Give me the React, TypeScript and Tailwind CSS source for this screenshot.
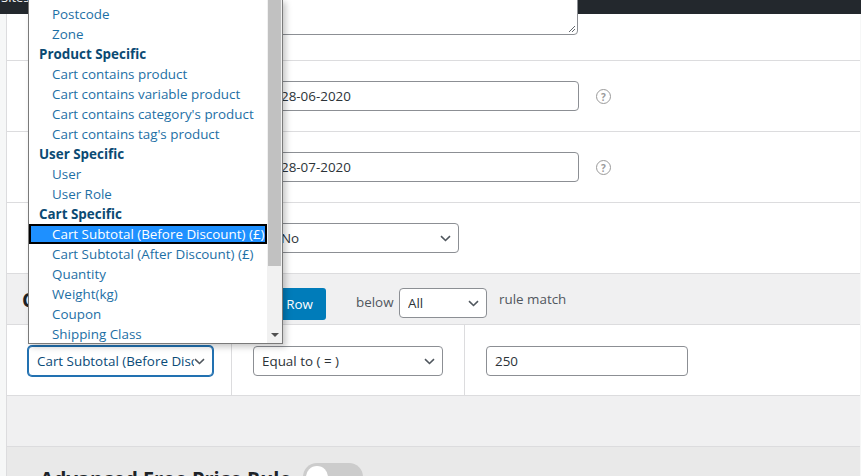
const font = "font-['Open_Sans',sans-serif]";

function Chevron() {
  return (
    <svg width="11" height="7" viewBox="0 0 11 7" className="shrink-0">
      <path d="M1 1.2l4.5 4.3L10 1.2" fill="none" stroke="#50575e" strokeWidth="1.6" />
    </svg>
  );
}

function Select({ value, className, focused }: { value: string; className: string; focused?: boolean }) {
  return (
    <div
      className={`flex h-[30px] items-center justify-between overflow-hidden rounded-[4px] bg-white pl-[8px] pr-[7px] text-[13.4px] ${
        focused
          ? "border border-[#2271b1] text-[#0a4b78] shadow-[0_0_0_1px_#2271b1]"
          : "border border-[#8c8f94] text-[#2c3338]"
      } ${className}`}
    >
      <span className="overflow-hidden whitespace-nowrap">{value}</span>
      <Chevron />
    </div>
  );
}

function Input({ value, className }: { value: string; className: string }) {
  return (
    <div
      className={`flex h-[30px] items-center rounded-[4px] border border-[#8c8f94] bg-white px-[8px] text-[13.4px] text-[#2c3338] ${className}`}
    >
      {value}
    </div>
  );
}

function Help() {
  return (
    <span className="ml-[17px] mt-[8px] flex h-[15px] w-[15px] items-center justify-center rounded-full border-[1.5px] border-[#9a9a9a] text-[10px] font-bold leading-none text-[#9a9a9a]">
      ?
    </span>
  );
}

function AdminBar() {
  return (
    <div className="h-[14px] overflow-hidden bg-[#23282d] text-[13px] text-[#f0f0f1]">
      <div className="-mt-[13px] flex h-[20px] items-center leading-[20px]">
        <span className="w-[298px] pl-[1px]">Sites</span>
        <span className="mt-[4px] text-[18px] font-bold text-[#a7aaad]">+</span>
        <span className="ml-[10px]">New</span>
      </div>
    </div>
  );
}

type Opt = { label: string; group?: boolean; selected?: boolean };

const options: Opt[] = [
  { label: "Postcode" },
  { label: "Zone" },
  { label: "Product Specific", group: true },
  { label: "Cart contains product" },
  { label: "Cart contains variable product" },
  { label: "Cart contains category's product" },
  { label: "Cart contains tag's product" },
  { label: "User Specific", group: true },
  { label: "User" },
  { label: "User Role" },
  { label: "Cart Specific", group: true },
  { label: "Cart Subtotal (Before Discount) (£)", selected: true },
  { label: "Cart Subtotal (After Discount) (£)" },
  { label: "Quantity" },
  { label: "Weight(kg)" },
  { label: "Coupon" },
  { label: "Shipping Class" },
  { label: "Payment Method" },
];

function Dropdown() {
  return (
    <div className="absolute left-[28px] top-[-1px] flex h-[345px] w-[255px] border border-[#7a7a7a] bg-white shadow-[3px_3px_6px_rgba(0,0,0,0.22)]">
      <div className="flex-1 overflow-hidden pt-[4px]">
        {options.map((o) =>
          o.group ? (
            <div key={o.label} className="h-[20px] pl-[10px] text-[13.4px] font-bold leading-[20px] text-[#0b4a73]">
              {o.label}
            </div>
          ) : o.selected ? (
            <div
              key={o.label}
              className="h-[20px] whitespace-nowrap border-2 border-black bg-[#1e90ff] pl-[21px] text-[13.4px] leading-[16px] text-white"
            >
              {o.label}
            </div>
          ) : (
            <div key={o.label} className="h-[20px] whitespace-nowrap pl-[23px] text-[13.4px] leading-[20px] text-[#1d6fa5]">
              {o.label}
            </div>
          )
        )}
      </div>
      <div className="flex w-[15px] flex-col bg-[#f1f1f1]">
        <div className="mx-[1px] h-[266px] bg-[#c1c1c1]" />
        <div className="flex-1" />
        <div className="flex h-[17px] items-center justify-center">
          <div className="h-0 w-0 border-x-[4px] border-t-[4px] border-x-transparent border-t-[#505050]" />
        </div>
      </div>
    </div>
  );
}

export default function App() {
  return (
    <div className={`relative h-[476px] w-[861px] overflow-hidden bg-[#f6f7f7] ${font}`}>
      <AdminBar />
      <div className="ml-[6px] mr-[1px] border-l border-[#dcdcde] bg-[#f0f0f1]">
        <div className="bg-white">
          <div className="flex h-[47px] border-b border-[#dcdcde]">
            <div className="w-[265px]" />
            <div className="relative -mt-[20px] h-[41px] w-[306px] rounded-[4px] border border-[#8c8f94] bg-white">
              <svg width="8" height="8" viewBox="0 0 8 8" className="absolute bottom-[1px] right-[1px]">
                <path d="M7 1L1 7M7 4L4 7" stroke="#50575e" strokeWidth="0.9" />
              </svg>
            </div>
          </div>
          <div className="flex h-[71px] items-start border-b border-[#dcdcde] pt-[20px]">
            <div className="w-[265px]" />
            <Input value="28-06-2020" className="w-[307px]" />
            <Help />
          </div>
          <div className="flex h-[71px] items-start border-b border-[#dcdcde] pt-[20px]">
            <div className="w-[265px]" />
            <Input value="28-07-2020" className="w-[307px]" />
            <Help />
          </div>
          <div className="flex h-[71px] items-start border-b border-[#dcdcde] pt-[20px]">
            <div className="w-[265px]" />
            <Select value="No" className="w-[187px]" />
          </div>
        </div>

        <div className="flex h-[50px] items-start pl-[15px] pt-[14px]">
          <h2 className="-mt-[2px] w-[231px] text-[20px] font-bold leading-[28px] text-[#1d2327]">Conditions</h2>
          <button className="flex h-[32px] w-[73px] items-center justify-end rounded-[3px] bg-[#007cba] pr-[13px] text-[13.4px] text-white">
            Add Row
          </button>
          <span className="ml-[30px] mt-[4px] w-[43px] text-[13.4px] leading-[20px] text-[#50575e]">below</span>
          <Select value="All" className="w-[88px]" />
          <span className="ml-[12px] mt-[1px] text-[13.4px] leading-[20px] text-[#50575e]">rule match</span>
        </div>

        <div className="flex h-[72px] border-y border-[#dcdcde] bg-white">
          <div className="w-[225px] border-r border-[#dcdcde] pl-[21px] pt-[21px]">
            <Select value="Cart Subtotal (Before Discount) (£)" className="w-[185px]" focused />
          </div>
          <div className="w-[233px] border-r border-[#dcdcde] pl-[21px] pt-[21px]">
            <Select value="Equal to ( = )" className="w-[190px]" />
          </div>
          <div className="pl-[21px] pt-[21px]">
            <Input value="250" className="w-[202px]" />
          </div>
        </div>

        <div className="h-[50px]" />

        <div className="flex h-[60px] items-start gap-[12px] border-t border-[#dcdcde] bg-[#e9e9e9] pl-[33px] pt-[17px]">
          <h2 className="text-[20px] font-bold leading-[30px] text-[#1d2327]">Advanced Free Price Rule</h2>
          <div className="-mt-[1px] h-[28px] w-[60px] rounded-full bg-[#cccccc] p-[3px]">
            <div className="h-[22px] w-[22px] rounded-full bg-white" />
          </div>
        </div>
      </div>
      <Dropdown />
    </div>
  );
}
